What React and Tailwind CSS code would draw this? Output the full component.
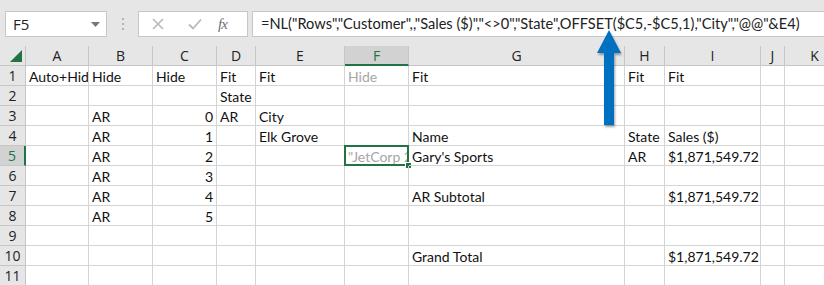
import React from "react"

const COLS = [
  { key: "rh", w: "w-[26px]" },
  { key: "A", w: "w-[63px]" },
  { key: "B", w: "w-[64px]" },
  { key: "C", w: "w-[64px]" },
  { key: "D", w: "w-[39px]" },
  { key: "E", w: "w-[89px]" },
  { key: "F", w: "w-[64px]" },
  { key: "G", w: "w-[216px]" },
  { key: "H", w: "w-[40px]" },
  { key: "I", w: "w-[96px]" },
  { key: "J", w: "w-[24px]" },
  { key: "K", w: "w-[60px]" },
]

const TOTAL = "$1,871,549.72"

// r = right aligned, g = grayed text
const ROWS = [
  { n: 1, A: "Auto+Hide", B: "Hide", C: "Hide", D: "Fit", E: "Fit", F: { t: "Hide", g: true }, G: "Fit", H: "Fit", I: "Fit" },
  { n: 2, D: "State" },
  { n: 3, B: "AR", C: { t: "0", r: true }, D: "AR", E: "City" },
  { n: 4, B: "AR", C: { t: "1", r: true }, E: "Elk Grove", G: "Name", H: "State", I: "Sales ($)" },
  { n: 5, B: "AR", C: { t: "2", r: true }, F: { t: "\"JetCorp 2", g: true }, G: "Gary's Sports", H: "AR", I: { t: TOTAL, r: true } },
  { n: 6, B: "AR", C: { t: "3", r: true } },
  { n: 7, B: "AR", C: { t: "4", r: true }, G: "AR Subtotal", I: { t: TOTAL, r: true } },
  { n: 8, B: "AR", C: { t: "5", r: true } },
  { n: 9 },
  { n: 10, G: "Grand Total", I: { t: TOTAL, r: true } },
  { n: 11 },
]

function FormulaBar() {
  return (
    <div className="h-[46px] flex items-start pt-[11px] bg-[#e6e6e6]">
      {/* name box */}
      <div className="ml-[5px] w-[102px] h-[26px] bg-white border border-[#c6c6c6] flex items-center justify-between pl-[7px] pr-[6px]">
        <span className="text-[15px] text-[#222] font-['Open_Sans']">F5</span>
        <svg width="9" height="5" viewBox="0 0 9 5"><path d="M0 0h9L4.5 5z" fill="#777" /></svg>
      </div>
      <div className="w-[31px] h-[26px] flex flex-col items-center justify-center gap-[3px]">
        <div className="w-[2px] h-[2px] bg-[#b4b4b4]" />
        <div className="w-[2px] h-[2px] bg-[#b4b4b4]" />
        <div className="w-[2px] h-[2px] bg-[#b4b4b4]" />
      </div>
      <div className="w-[110px] h-[26px] bg-white border border-[#c6c6c6] flex items-center">
        <svg className="ml-[13px]" width="12" height="12" viewBox="0 0 12 12">
          <path d="M1 1l10 10M11 1L1 11" stroke="#b9b9b9" strokeWidth="1.6" />
        </svg>
        <svg className="ml-[24px]" width="14" height="12" viewBox="0 0 14 12">
          <path d="M1 6.5l4 4L13 1.5" stroke="#b9b9b9" strokeWidth="1.8" fill="none" />
        </svg>
        <span className="ml-[16px] text-[15px] italic text-[#707070] font-['Liberation_Serif'] tracking-[-1px]">fx</span>
      </div>
      <div className="ml-[4px] flex-1 h-[26px] bg-white border border-[#c6c6c6] border-r-0 flex items-center pl-[8px] overflow-hidden whitespace-nowrap">
        <span className="text-[14.6px] text-[#222] font-['Lato']">
          =NL("Rows","Customer",,"Sales ($)","&lt;&gt;0","State",OFFSET($C5,-$C5,1),"City","@@"&amp;E4)
        </span>
      </div>
    </div>
  )
}

function HeaderRow() {
  return (
    <div className="flex bg-[#e6e6e6]">
      {COLS.map((c) => {
        if (c.key === "rh") {
          return (
            <div key={c.key} className={`${c.w} shrink-0 h-[20px] border-r border-b border-[#c6c6c6] flex items-end justify-end pr-[3px] pb-[3px]`}>
              <svg width="12" height="12" viewBox="0 0 12 12"><path d="M12 0V12H0z" fill="#217346" /></svg>
            </div>
          )
        }
        const sel = c.key === "F"
        return (
          <div
            key={c.key}
            className={`${c.w} shrink-0 h-[20px] border-r border-[#c6c6c6] text-center leading-[19px] text-[14px] font-['Open_Sans'] ${sel ? "bg-[#d2d2d2] text-[#217346] border-b-2 border-b-[#217346]" : "text-[#222] border-b border-b-[#c6c6c6]"}`}
          >
            {c.key}
          </div>
        )
      })}
    </div>
  )
}

function Row({ row }) {
  const selRow = row.n === 5
  return (
    <div className="flex">
      {COLS.map((c) => {
        if (c.key === "rh") {
          return (
            <div
              key={c.key}
              className={`${c.w} shrink-0 h-[20px] border-b border-[#c6c6c6] text-center leading-[20px] text-[14px] font-['Open_Sans'] ${selRow ? "bg-[#d2d2d2] text-[#217346] border-r-2 border-r-[#217346]" : "bg-[#e6e6e6] text-[#222] border-r border-r-[#c6c6c6]"}`}
            >
              {row.n}
            </div>
          )
        }
        let v = row[c.key]
        if (typeof v === "string") v = { t: v }
        const active = selRow && c.key === "F"
        return (
          <div
            key={c.key}
            className={`${c.w} shrink-0 h-[20px] border-r border-b border-[#d4d4d4] relative ${active ? "" : "overflow-hidden"}`}
          >
            {v && (
              <div
                className={`h-full overflow-hidden whitespace-nowrap px-[3px] leading-[21px] text-[14px] font-['Lato'] ${v.r ? "text-right" : ""} ${v.g ? "text-[#a6a6a6]" : "text-[#111]"}`}
              >
                {v.t}
              </div>
            )}
            {active && (
              <>
                <div className="absolute -left-[1px] -top-[1px] -right-[1px] -bottom-[1px] border-2 border-[#217346]" />
                <div className="absolute -right-[4px] -bottom-[4px] w-[7px] h-[7px] bg-[#217346] border border-white" />
              </>
            )}
          </div>
        )
      })}
    </div>
  )
}

export default function App() {
  return (
    <div className="relative w-[824px] h-[285px] overflow-hidden bg-white">
      <FormulaBar />
      <HeaderRow />
      {ROWS.map((r) => (
        <Row key={r.n} row={r} />
      ))}
      {/* annotation arrow */}
      <svg
        className="absolute left-[594px] top-[28px] drop-shadow-[1px_2px_1px_rgba(0,0,0,0.35)]"
        width="30"
        height="100"
        viewBox="0 0 30 100"
      >
        <path d="M15 2L27 25H20V97H10V25H3z" fill="#0070c0" />
      </svg>
    </div>
  )
}
